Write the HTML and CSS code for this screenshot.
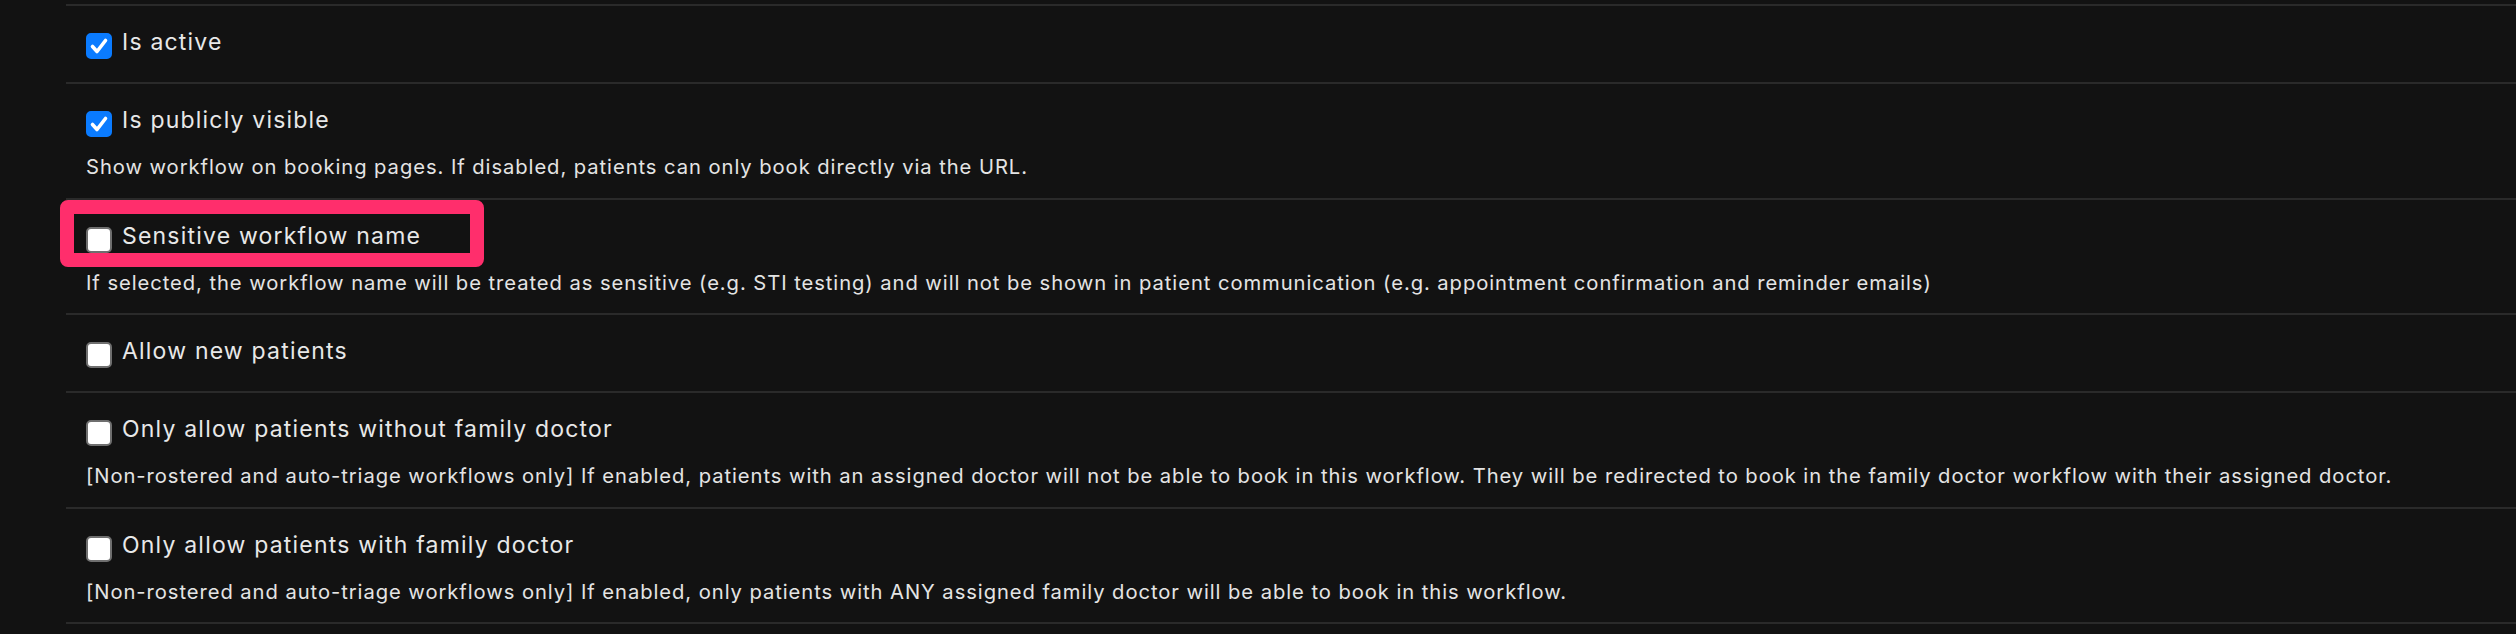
FILE: index.html
```html
<!DOCTYPE html>
<html lang="en">
<head>
<meta charset="utf-8">
<title>Workflow settings</title>
<link rel="stylesheet" href="styles.css">
</head>
<body>
<div class="page">
  <div class="fields">
    <div class="field">
      <label class="check-row">
        <span class="cb cb-on"><svg viewBox="0 0 26 26" width="26" height="26"><path d="M6.5 13.5 L11 18.5 L19.5 7.5" fill="none" stroke="#fff" stroke-width="3.6" stroke-linecap="round" stroke-linejoin="round"/></svg></span>
        <span class="label">Is active</span>
      </label>
    </div>
    <div class="field">
      <label class="check-row">
        <span class="cb cb-on"><svg viewBox="0 0 26 26" width="26" height="26"><path d="M6.5 13.5 L11 18.5 L19.5 7.5" fill="none" stroke="#fff" stroke-width="3.6" stroke-linecap="round" stroke-linejoin="round"/></svg></span>
        <span class="label">Is publicly visible</span>
      </label>
      <p class="desc">Show workflow on booking pages. If disabled, patients can only book directly via the URL.</p>
    </div>
    <div class="field">
      <div class="highlight"></div>
      <label class="check-row">
        <span class="cb"></span>
        <span class="label">Sensitive workflow name</span>
      </label>
      <p class="desc">If selected, the workflow name will be treated as sensitive (e.g. STI testing) and will not be shown in patient communication (e.g. appointment confirmation and reminder emails)</p>
    </div>
    <div class="field">
      <label class="check-row">
        <span class="cb"></span>
        <span class="label">Allow new patients</span>
      </label>
    </div>
    <div class="field">
      <label class="check-row">
        <span class="cb"></span>
        <span class="label">Only allow patients without family doctor</span>
      </label>
      <p class="desc">[Non-rostered and auto-triage workflows only] If enabled, patients with an assigned doctor will not be able to book in this workflow. They will be redirected to book in the family doctor workflow with their assigned doctor.</p>
    </div>
    <div class="field">
      <label class="check-row">
        <span class="cb"></span>
        <span class="label">Only allow patients with family doctor</span>
      </label>
      <p class="desc">[Non-rostered and auto-triage workflows only] If enabled, only patients with ANY assigned family doctor will be able to book in this workflow.</p>
    </div>
  </div>
</div>
</body>
</html>
```

FILE: styles.css
```css
html, body {
  margin: 0;
  padding: 0;
  background: #121212;
}

body {
  font-family: Inter, "Liberation Sans", sans-serif;
  color: #e6e6e6;
  overflow: hidden;
}

.page {
  padding: 4px 0 0 66px;
}

.fields {
  border-top: 2px solid #2a2a2a;
}

.field {
  position: relative;
  padding: 21px 0 16.5px 20px;
  border-bottom: 2px solid #2a2a2a;
}

.check-row {
  display: flex;
  align-items: flex-start;
  margin-bottom: 6.5px;
}

.cb {
  flex: none;
  box-sizing: border-box;
  width: 26px;
  height: 26px;
  margin-top: 6px;
  margin-right: 10px;
  border-radius: 5px;
  background: #ffffff;
  border: 2px solid #6f6f6f;
}

.cb svg {
  display: block;
  margin: -2px;
}

.cb-on {
  background: #0a7bff;
  border-color: #0a7bff;
}

.label {
  font-size: 23px;
  letter-spacing: 1.2px;
  line-height: 30px;
  color: #e8e8e8;
}

.desc {
  margin: 16px 0 0 0;
  font-size: 20.2px;
  letter-spacing: 0.94px;
  line-height: 28px;
  color: #e4e4e4;
}

.highlight {
  position: absolute;
  left: -6px;
  top: 0;
  width: 424px;
  height: 67px;
  box-sizing: border-box;
  border: 14px solid #ff2e6c;
  border-radius: 8px;
  pointer-events: none;
}
```
